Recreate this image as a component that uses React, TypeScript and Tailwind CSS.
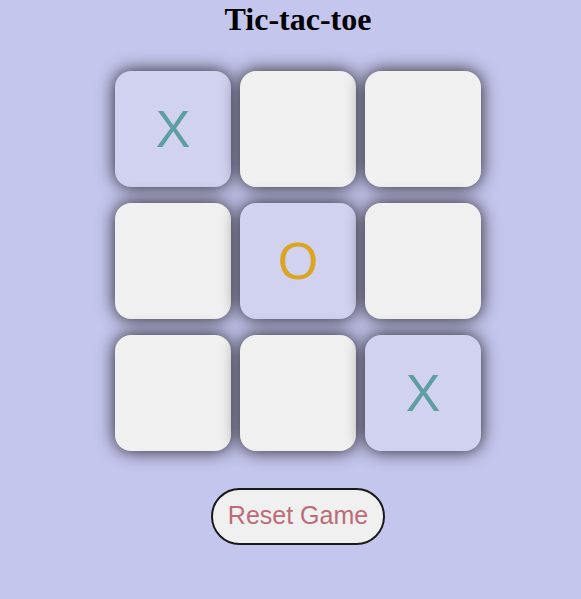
const board = ['X', '', '', '', 'O', '', '', '', 'X'];

function Cell({ value }: { value: string }) {
  const filled = value !== '';
  return (
    <button
      className={
        filled
          ? 'w-[116px] h-[116px] rounded-[16px] bg-[#d1d2f0] shadow-[0_0_18px_rgba(0,0,0,0.85)] flex items-center justify-center'
          : 'w-[116px] h-[116px] rounded-[16px] bg-[#f0f0f0] shadow-[0_0_18px_rgba(0,0,0,0.85)] flex items-center justify-center'
      }
    >
      <span
        className={
          value === 'X'
            ? "text-[52px] leading-none text-[#5f9ea0] font-['Liberation_Sans',Arial,sans-serif]"
            : "text-[52px] leading-none text-[#daa520] font-['Liberation_Sans',Arial,sans-serif]"
        }
      >
        {value}
      </span>
    </button>
  );
}

export default function App() {
  return (
    <div className="min-h-[599px] w-full bg-[#c5c6ee] pl-[15px] flex flex-col items-center">
      <h1 className="mt-px text-[32px] leading-[37px] font-bold text-black font-['Liberation_Serif','Times_New_Roman',serif]">
        Tic-tac-toe
      </h1>
      <div className="mt-[33px] grid grid-cols-[116px_116px_116px] gap-x-[9px] gap-y-[16px]">
        {board.map((v, i) => (
          <Cell key={i} value={v} />
        ))}
      </div>
      <button className="mt-[37px] h-[57px] px-[15px] pb-[2px] rounded-full border-2 border-[#1a1a1a] bg-[#f0f0f0] text-[25px] text-[#bb6c78] font-['Liberation_Sans',Arial,sans-serif]">
        Reset Game
      </button>
    </div>
  );
}
